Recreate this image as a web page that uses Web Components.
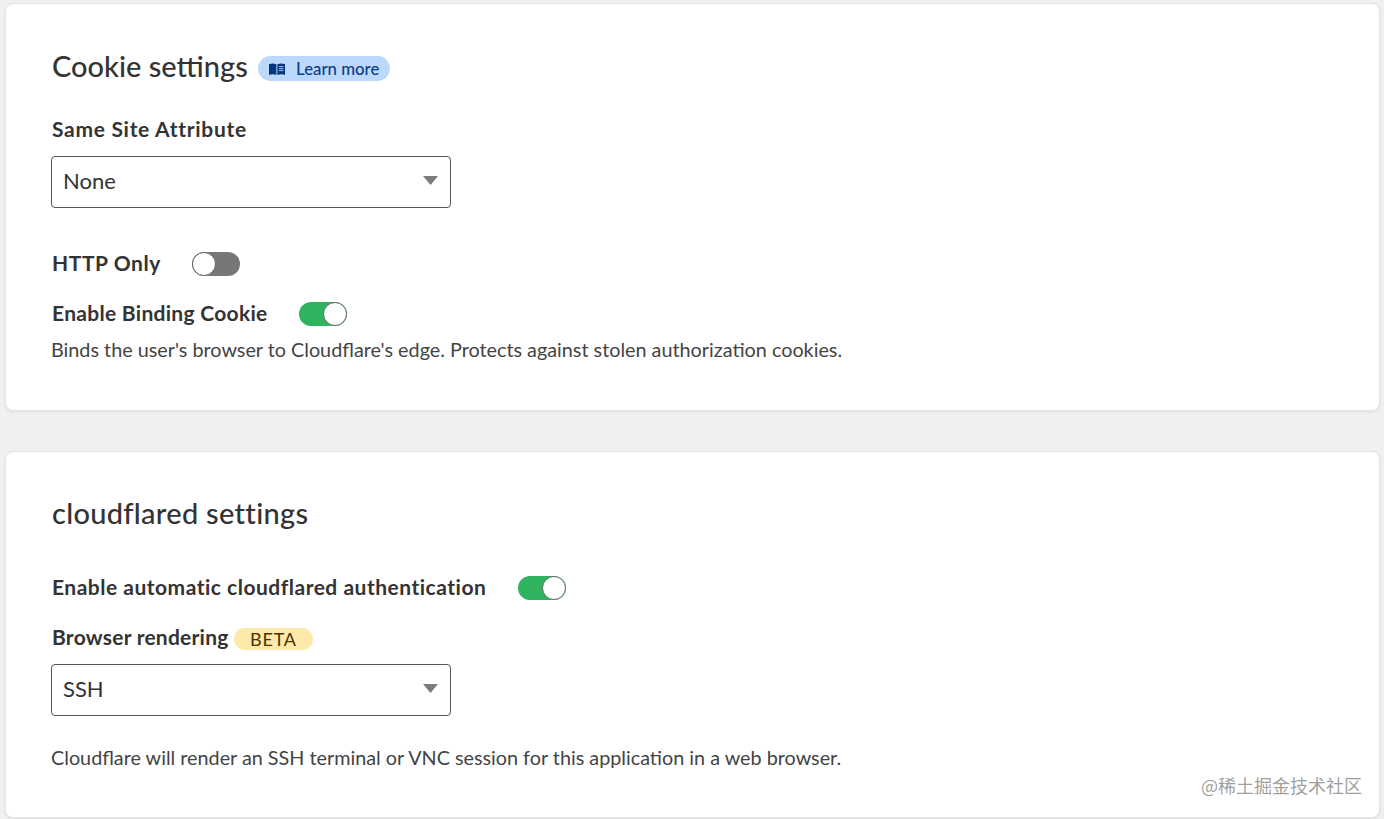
<!DOCTYPE html>
<html lang="en">
<head>
<meta charset="utf-8">
<title>Application settings</title>
<style>
	html, body { margin: 0; height: 819px; overflow: hidden; }
	body {
		background: #f0f0f0;
		color: #333;
		font-family: "Lato", "Noto Sans", sans-serif;
		padding: 3px 4px 0 5px;
		box-sizing: border-box;
	}
</style>
</head>
<body>

<settings-card style="height: 408px; margin-bottom: 40px; --pad-top: 43px;">
	<card-title>Cookie settings <learn-more>Learn more</learn-more></card-title>
	<field-label style="margin-top: 33px; letter-spacing: .7px;">Same Site Attribute</field-label>
	<select-box style="margin-top: 16px;">None</select-box>
	<toggle-row style="margin-top: 43px; --gap: 31px; letter-spacing: .55px;">HTTP Only</toggle-row>
	<toggle-row style="margin-top: 24px; --gap: 31px; letter-spacing: .29px;" on>Enable Binding Cookie</toggle-row>
	<help-text style="margin-top: 10px;">Binds the user's browser to Cloudflare's edge. Protects against stolen authorization cookies.</help-text>
</settings-card>

<settings-card style="height: 367px; --pad-top: 42px;">
	<card-title style="letter-spacing: .3px;">cloudflared settings</card-title>
	<toggle-row style="margin-top: 45px; --gap: 32px; letter-spacing: .5px;" on>Enable automatic cloudflared authentication</toggle-row>
	<field-label style="margin-top: 23px; letter-spacing: .24px;">Browser rendering <beta-tag>BETA</beta-tag></field-label>
	<select-box style="margin-top: 16px;">SSH</select-box>
	<help-text style="margin-top: 29px;">Cloudflare will render an SSH terminal or VNC session for this application in a web browser.</help-text>
	<water-mark>@稀土掘金技术社区</water-mark>
</settings-card>

<script>
(function() {
	"use strict";

	// small helper, every element just sets its own shadow markup
	function define(name, html, observe) {
		customElements.define(name, class extends HTMLElement {
			constructor() {
				super();
				this.attachShadow({ mode: "open" }).innerHTML = html;
			}
			connectedCallback() {
				if (observe) observe(this);
			}
		});
	}

	define("settings-card", `
		<style>
			:host {
				display: block;
				position: relative;
				box-sizing: border-box;
				background: #fff;
				border: 1px solid #e4e4e4;
				border-radius: 8px;
				box-shadow: 0 1px 3px rgba(0, 0, 0, .08);
				padding: var(--pad-top, 45px) 40px 0 45px;
			}
		</style>
		<slot></slot>`);

	define("card-title", `
		<style>
			:host {
				display: flex;
				align-items: center;
				gap: 3px;
				height: 36px;
				font-size: 29px;
				font-weight: 500;
				white-space: pre;
				color: #333;
				padding-left: 1px;
			}
		</style>
		<slot></slot>`);

	define("learn-more", `
		<style>
			:host {
				display: inline-flex;
				align-items: center;
				gap: 11px;
				height: 25px;
				margin-top: 7px;
				padding: 0 11px;
				border-radius: 13px;
				background: #bcd9fd;
				color: #0b3a8c;
				font-size: 16.8px;
				letter-spacing: normal;
			}
			svg { display: block; }
		</style>
		<svg width="16" height="12" viewBox="0 0 16 12" aria-hidden="true">
			<path fill="#06357f" d="M0 1.2C2 .2 5 .2 7.4 1.2V12C5 11 2 11 0 12z"/>
			<path fill="#06357f" d="M8.4 1.2C10.8 .2 14 .2 16 1.2V12C14 11 10.8 11 8.4 12z"/>
			<path stroke="#bcd9fd" stroke-width=".9" d="M10 3.6h4.4M10 5.6h4.4M10 7.6h4.4"/>
		</svg>
		<span><slot></slot></span>`);

	define("field-label", `
		<style>
			:host {
				display: flex;
				align-items: center;
				height: 24px;
				padding-left: 1px;
				font-size: 21px;
				font-weight: 700;
				color: #333;
				white-space: pre;
			}
		</style>
		<slot></slot>`);

	define("beta-tag", `
		<style>
			:host {
				display: inline-flex;
				align-items: center;
				justify-content: center;
				box-sizing: border-box;
				width: 79px;
				height: 22px;
				margin-top: 6px;
				border-radius: 11px;
				background: #fde9a9;
				color: #4a3000;
				font-size: 18px;
				font-weight: 400;
				letter-spacing: .8px;
			}
		</style>
		<slot></slot>`);

	define("select-box", `
		<style>
			:host {
				display: flex;
				align-items: center;
				justify-content: space-between;
				box-sizing: border-box;
				width: 400px;
				height: 52px;
				padding: 0 12px 3px 11px;
				background: #fff;
				border: 1px solid #555;
				border-radius: 4px;
				font-size: 22px;
				color: #333;
			}
			svg { display: block; }
		</style>
		<slot></slot>
		<svg width="15" height="9" viewBox="0 0 16 9" preserveAspectRatio="none" aria-hidden="true"><path fill="#7b7b7b" d="M0 0h16L8 9z"/></svg>`);

	define("toggle-switch", `
		<style>
			:host {
				display: block;
				box-sizing: border-box;
				position: relative;
				width: 48px;
				height: 24px;
				border-radius: 12px;
				background: #777;
				flex: none;
			}
			:host([on]) { background: #2fb35f; }
			i {
				position: absolute;
				left: 0;
				top: 0;
				box-sizing: border-box;
				width: 24px;
				height: 24px;
				border-radius: 50%;
				background: #fff;
				border: 1px solid #666;
			}
			:host([on]) i { left: 24px; }
		</style>
		<i></i>`);

	define("toggle-row", `
		<style>
			:host {
				display: flex;
				align-items: center;
				gap: var(--gap, 32px);
				height: 26px;
				padding-left: 1px;
				font-size: 21px;
				font-weight: 700;
				color: #333;
			}
			span { margin-top: -4px; }
		</style>
		<span><slot></slot></span>
		<toggle-switch></toggle-switch>`, function(el) {
			if (el.hasAttribute("on")) {
				el.shadowRoot.querySelector("toggle-switch").setAttribute("on", "");
			}
		});

	define("help-text", `
		<style>
			:host {
				display: block;
				font-size: 19.8px;
				line-height: 24px;
				color: #444;
				white-space: nowrap;
			}
		</style>
		<slot></slot>`);

	// sits over the card corner, it is the site's stamp on the picture
	define("water-mark", `
		<style>
			:host {
				position: absolute;
				right: 17px;
				bottom: 20px;
				font-family: "Noto Sans CJK SC", sans-serif;
				font-size: 18px;
				line-height: 24px;
				color: rgba(120, 120, 120, .72);
			}
		</style>
		<slot></slot>`);
})();
</script>
</body>
</html>
